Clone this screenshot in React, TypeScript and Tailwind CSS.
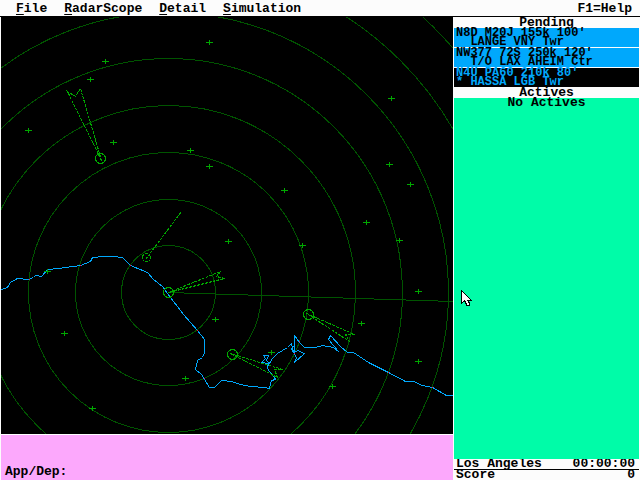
import React from 'react';

interface Strip {
  id: string;
  first: string;
  second: string;
  selected?: boolean;
}

const menus = ['File', 'RadarScope', 'Detail', 'Simulation'];

const pending: Strip[] = [
  { id: 'N8D', first: "N8D M20J 155k 100'", second: '  LANGE VNY Twr' },
  { id: 'NW377', first: "NW377 72S 250k 120'", second: '  T/O LAX AHEIM Ctr' },
  { id: 'N4U', first: "N4U PA60 210k 80'", second: '* HASSA LGB Twr', selected: true },
];

const rings = [47, 93, 140, 187, 234, 280, 328, 375];

const fixes = [
  [209, 42], [105, 61], [90, 79], [28, 130], [113, 142], [190, 150], [209, 166],
  [391, 98], [389, 164], [410, 184], [284, 190], [366, 222], [228, 241], [302, 245],
  [399, 240], [47, 271], [418, 291], [361, 323], [215, 319], [64, 333], [185, 378],
  [271, 352], [418, 361], [332, 386], [92, 408],
];

// airports: position, radius and the dashed approach feather
const airports = [
  { x: 100, y: 158, r: 5, path: 'M101 160 L67 91 L75 96 L80 88 Z' },
  { x: 168, y: 292, r: 5, path: 'M168 292 L220 271 L216 276 L224 278 Z' },
  { x: 308, y: 314, r: 5, path: 'M306 313 L354 334 L345 334 L349 341 Z' },
  { x: 232, y: 354, r: 5, path: 'M230 353 L282 369 L274 369 L277 377 Z' },
  { x: 146, y: 257, r: 4, path: 'M145 259 L181 211' },
];

const coast =
  'M1 289 L7 287 L10 282 L17 278 L28 279 L33 277 L35 275 L41 276 L47 269 L59 268 L65 267 L73 266 L80 265 ' +
  'L90 261 L92 257 L104 256 L113 256 L122 257 L130 265 L147 272 L153 279 L162 286 L167 293 L183 314 L197 330 ' +
  'L204 339 L204 352 L202 357 L197 360 L195 369 L201 374 L209 387 L214 387 L221 380 L231 381 L240 384 L250 386 ' +
  'L264 387 L269 388 L271 380 L275 379 L274 377 L268 370 L267 367 L268 363 L261 362 L265 358 L263 355 L268 355 ' +
  'L266 360 L269 363 L272 358 L277 353 L287 347 L291 343 L293 352 L291 348 L294 345 L294 335 L299 342 L304 347 ' +
  'L315 347 L322 345 L333 347 L338 351 L328 339 L330 335 L340 346 L347 352 L353 352 L368 362 L388 372 L405 381 ' +
  'L413 381 L422 385 L432 387 L446 395 L453 395';

const harbor = 'M294 345 L294 352 L297 350 L304 353 L294 362 L296 357 L293 352';

const crossings = [[29, 279], [80, 265], [130, 265], [197, 330], [204, 378], [299, 341], [294, 353], [388, 372], [432, 387]];

const RadarScope: React.FC = () => (
  <svg
    className="block h-full w-full"
    viewBox="1 17 452 417"
    preserveAspectRatio="xMidYMid slice"
    shapeRendering="crispEdges"
    fill="none"
    role="img"
    aria-label="Radar scope"
  >
    <g stroke="#005400">
      {rings.map((r) => (
        <circle key={r} cx="168.5" cy="292.5" r={r} />
      ))}
      <path d="M168 292.5 L453 301.5" />
    </g>
    <g transform="translate(0.5 0.5)">
      <path d={coast} stroke="#00a8fc" />
      <path d={harbor} stroke="#00a8fc" />
      <g stroke="#00a800">
        {airports.map((a) => (
          <React.Fragment key={a.path}>
            <circle cx={a.x} cy={a.y} r={a.r} />
            <path d={a.path} strokeDasharray="3 1" />
          </React.Fragment>
        ))}
      </g>
    </g>
    {fixes.map(([x, y]) => (
      <path key={`${x}-${y}`} d={`M${x - 3} ${y}h7v1h-7z M${x} ${y - 2}h1v5h-1z`} fill="#00a800" />
    ))}
    {crossings.map(([x, y]) => (
      <rect key={`${x}-${y}`} x={x} y={y} width="1" height="1" fill="#fc0054" />
    ))}
  </svg>
);

const Pointer: React.FC = () => (
  <svg className="absolute left-[7px] top-[192px] h-[17px] w-[12px]" viewBox="0 0 12 17" aria-hidden="true">
    <path
      d="M.5 .5 V13.5 L3.5 10.5 L6 15.5 H8.5 V13.5 L7 10.5 H10.5 Z"
      fill="#fcfcfc"
      stroke="#000"
      shapeRendering="crispEdges"
    />
  </svg>
);

const App: React.FC = () => {
  return (
    <div className="flex h-screen flex-col overflow-hidden bg-[#fcfcfc] font-['Liberation_Mono',monospace] text-[13px] font-bold text-black">
      {/* Menu bar */}
      <header className="flex h-[17px] shrink-0 items-center justify-between border-b border-black pl-4 pr-2 pt-px leading-[15px]">
        <nav className="flex gap-[17px]">
          {menus.map((name) => (
            <button key={name} type="button">
              <span className="underline underline-offset-2">{name[0]}</span>
              {name.slice(1)}
            </button>
          ))}
        </nav>
        <button type="button">F1=Help</button>
      </header>

      <div className="flex min-h-0 flex-1">
        {/* Scope and command line */}
        <main className="flex min-w-0 flex-1 flex-col pl-px">
          <div className="min-h-0 flex-1 bg-black">
            <RadarScope />
          </div>
          <div className="mt-px flex h-[45px] shrink-0 items-end bg-[#fca8fc] px-1 pb-[2px] leading-3">
            <label htmlFor="command">App/Dep:</label>
            <input id="command" type="text" className="ml-2 h-3 min-w-0 flex-1 bg-transparent outline-none" />
          </div>
        </main>

        {/* Flight strips */}
        <aside className="flex w-[187px] shrink-0 flex-col px-px">
          <h2 className="h-[11px] text-center leading-[11px]">Pending</h2>
          <ul className="flex flex-col gap-px">
            {pending.map((strip) => (
              <li key={strip.id}>
                <button
                  type="button"
                  className={`block h-[19px] w-full whitespace-pre pl-[2px] pt-px text-left text-xs leading-[9px] ${
                    strip.selected ? 'bg-black text-[#00a8fc]' : 'bg-[#00a8fc] text-black'
                  }`}
                >
                  <span className="block leading-[9px]">{strip.first}</span>
                  <span className="block leading-[9px]">{strip.second}</span>
                </button>
              </li>
            ))}
          </ul>
          <h2 className="h-[11px] text-center leading-[11px]">Actives</h2>
          <div className="relative min-h-0 flex-1 bg-[#00fca8]">
            <p className="text-center leading-[10px]">No Actives</p>
            <Pointer />
          </div>
          <dl className="shrink-0 leading-[10px]">
            <div className="flex justify-between border-b border-black pl-[2px] pr-1">
              <dt>Los Angeles</dt>
              <dd>00:00:00</dd>
            </div>
            <div className="flex justify-between pl-[2px] pr-1">
              <dt>Score</dt>
              <dd>0</dd>
            </div>
          </dl>
        </aside>
      </div>
    </div>
  );
};

export default App;
